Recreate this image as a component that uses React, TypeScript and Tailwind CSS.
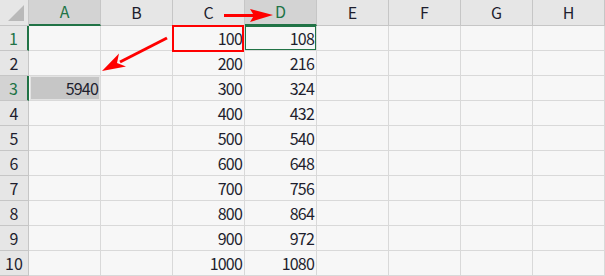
const cols = ['A', 'B', 'C', 'D', 'E', 'F', 'G', 'H'];
const rows = [1, 2, 3, 4, 5, 6, 7, 8, 9, 10];

const selCols = ['A', 'D'];
const selRows = [1, 3];

function cellValue(col: string, row: number): string {
  if (col === 'C') return String(row * 100);
  if (col === 'D') return String(row * 108);
  if (col === 'A' && row === 3) return '5940';
  return '';
}

export default function App() {
  return (
    <div
      className="relative w-[605px] h-[276px] overflow-hidden bg-[#f7f7f7] text-[#1e1e2e]"
      style={{ fontFamily: '"Noto Sans CJK JP", "Liberation Sans", sans-serif' }}
    >
      <div className="grid grid-cols-[29px_repeat(8,72px)] grid-rows-[26px_repeat(10,25px)]">
        {/* corner */}
        <div className="relative bg-[#e6e6e6] border-r border-b border-[#c6c6c6]">
          <div className="absolute right-[4px] bottom-[4px] w-0 h-0 border-l-[16px] border-l-transparent border-b-[16px] border-b-[#b9b9b9]" />
        </div>
        {cols.map((c) => {
          const sel = selCols.includes(c);
          return (
            <div
              key={c}
              className={`flex items-center justify-center text-[16px] leading-none pb-[2px] border-r border-[#c6c6c6] ${
                sel
                  ? 'bg-[#d3d3d3] text-[#217346] border-b-2 border-b-[#217346]'
                  : 'bg-[#e6e6e6] border-b border-b-[#c6c6c6]'
              }`}
            >
              {c}
            </div>
          );
        })}
        {rows.map((r) => {
          const sel = selRows.includes(r);
          return [
            <div
              key={`h${r}`}
              className={`flex items-center justify-center text-[16px] leading-none border-b border-[#c6c6c6] ${
                sel
                  ? `${r === 3 ? 'bg-[#d3d3d3]' : 'bg-[#e6e6e6]'} text-[#217346] border-r-2 border-r-[#217346]`
                  : 'bg-[#e6e6e6] border-r border-r-[#c6c6c6]'
              }`}
            >
              {r}
            </div>,
            ...cols.map((c) => {
              const v = cellValue(c, r);
              const isA3 = c === 'A' && r === 3;
              return (
                <div
                  key={`${c}${r}`}
                  className="relative flex items-center justify-end pr-[2px] border-r border-b border-[#d9d9d9] text-[16px] leading-none tracking-[-0.8px]"
                >
                  {isA3 && (
                    <div className="absolute left-[1px] top-0 right-0 bottom-0 bg-[#c6c6c6] border border-[#e3e3e3]" />
                  )}
                  <span className="relative">{v}</span>
                </div>
              );
            }),
          ];
        })}
      </div>

      {/* red outline on C1 */}
      <div className="absolute left-[172px] top-[25px] w-[72px] h-[27px] border-2 border-[#ff0000]" />
      {/* active cell D1 */}
      <div className="absolute left-[245px] top-[26px] w-[71px] h-[24px] border border-[#217346]" />

      {/* arrows */}
      <svg className="absolute left-0 top-0" width="605" height="276" viewBox="0 0 605 276">
        <line x1="224" y1="15.5" x2="254" y2="15.5" stroke="#ff0000" strokeWidth="3" />
        <polygon points="273,15 250,9 254,15.5 250,22" fill="#ff0000" />
        <line x1="167" y1="38" x2="120" y2="62" stroke="#ff0000" strokeWidth="3" />
        <polygon points="102,71 119,53.5 117,63 126,66.5" fill="#ff0000" />
      </svg>
    </div>
  );
}
